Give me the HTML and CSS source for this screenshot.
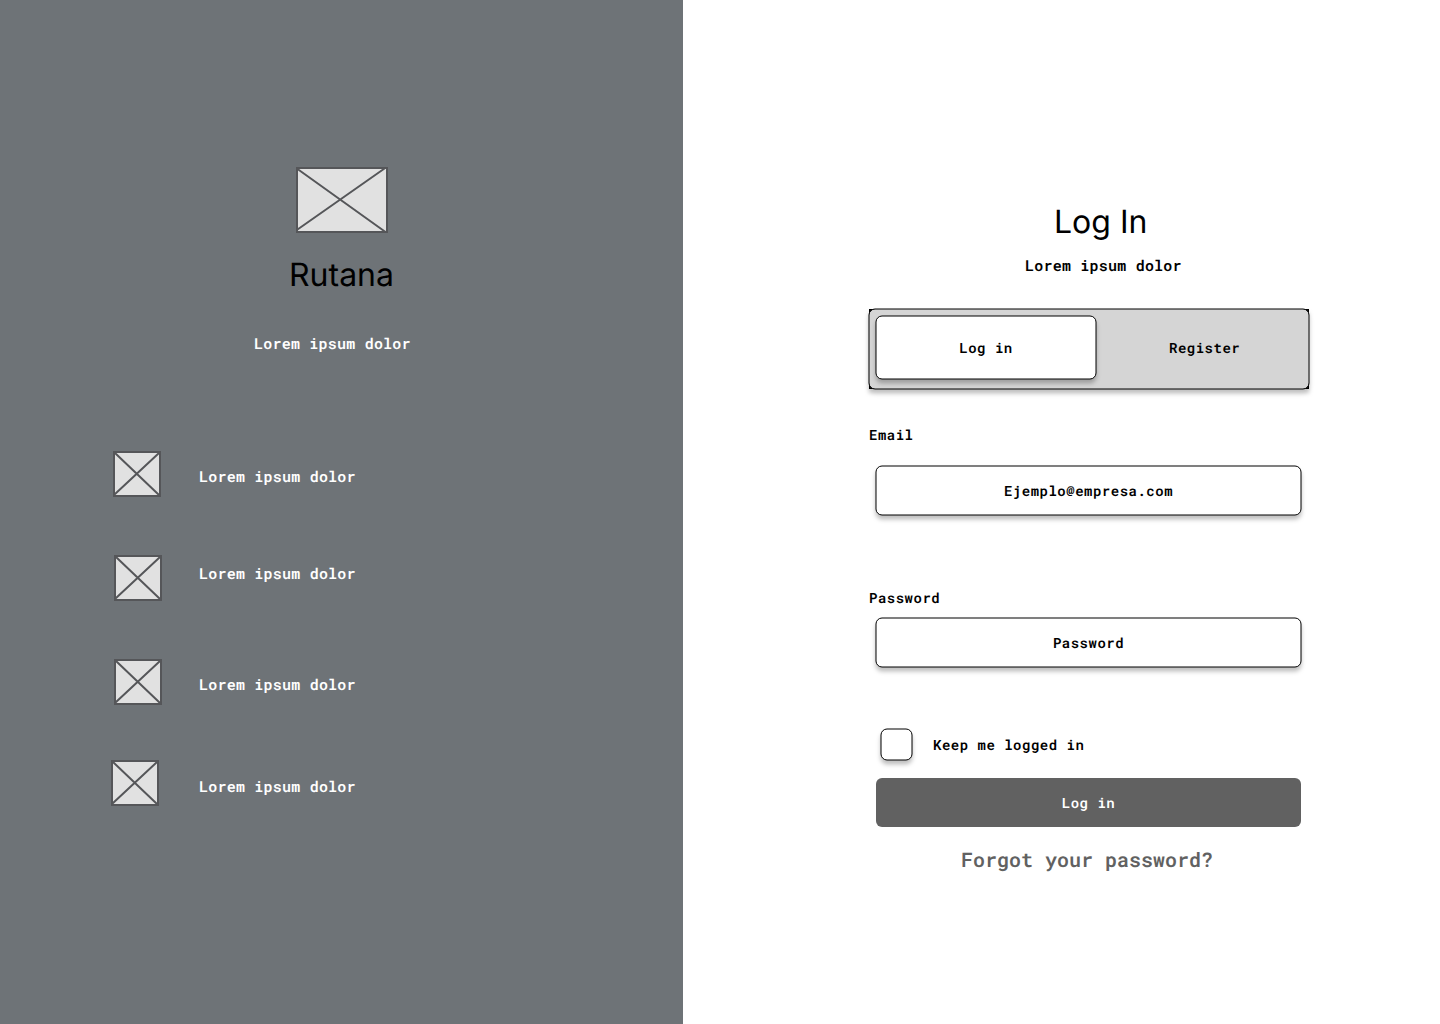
FILE: index.html
```html
<!DOCTYPE html>
<html lang="es">
<head>
<meta charset="utf-8">
<title>Rutana</title>
<link rel="stylesheet" href="styles.css">
</head>
<body>
<svg class="symbols" width="0" height="0">
  <symbol id="thumb" viewBox="0 0 48 46">
    <rect x="1" y="1" width="46" height="44" fill="#e1e1e1"/>
    <path d="M2 2 46 44M46 2 1.500 43.500" fill="none"/>
    <rect x="1" y="1" width="46" height="44" fill="none"/>
  </symbol>
</svg>
<main class="page">
  <section class="brand">
    <svg class="logo" viewBox="0 0 92 66">
      <rect x="1" y="1" width="90" height="64" fill="#e1e1e1"/>
      <path d="M1.500 2 89.500 65M88.500 1.500 1.500 62.500"/>
      <rect x="1" y="1" width="90" height="64" fill="none"/>
    </svg>
    <h1 class="title">Rutana</h1>
    <p class="copy tagline">Lorem ipsum dolor</p>
    <ul class="features">
      <li class="feature"><svg class="thumb"><use href="#thumb"/></svg><span class="copy">Lorem ipsum dolor</span></li>
      <li class="feature feature-second"><svg class="thumb"><use href="#thumb"/></svg><span class="copy">Lorem ipsum dolor</span></li>
      <li class="feature feature-third"><svg class="thumb"><use href="#thumb"/></svg><span class="copy">Lorem ipsum dolor</span></li>
      <li class="feature feature-last"><svg class="thumb"><use href="#thumb"/></svg><span class="copy">Lorem ipsum dolor</span></li>
    </ul>
  </section>
  <form class="login">
    <h2 class="title">Log In</h2>
    <p class="copy subtitle">Lorem ipsum dolor</p>
    <div class="tabs">
      <svg class="frame"><rect width="440" height="80"/><rect class="tray" width="440" height="80" rx="6"/></svg>
      <div class="tab-list">
        <div class="tab">
          <svg class="frame"><rect class="outline" width="220" height="63" rx="6"/></svg>
          <span class="label">Log in</span>
        </div>
        <span class="label tab-off">Register</span>
      </div>
    </div>
    <span class="label email-label">Email</span>
    <div class="field">
      <svg class="frame"><rect class="outline" width="425" height="49" rx="6"/></svg>
      <span class="label">Ejemplo@empresa.com</span>
    </div>
    <span class="label password-label">Password</span>
    <div class="field">
      <svg class="frame"><rect class="outline" width="425" height="49" rx="6"/></svg>
      <span class="label">Password</span>
    </div>
    <div class="keep">
      <svg class="frame check"><rect class="outline" x="1" y="1" width="31" height="31" rx="6"/></svg>
      <span class="label">Keep me logged in</span>
    </div>
    <button class="submit label" type="button">Log in</button>
    <a class="forgot">Forgot your password?</a>
  </form>
</main>
</body>
</html>
```
FILE: styles.css
```css
* { box-sizing: border-box; }
body { margin: 0; background: #fff; color: #000; text-rendering: geometricPrecision; }
p, h1, h2, ul { margin: 0; padding: 0; }
.symbols { display: none; }
.page { display: grid; grid-template-columns: 683px 1fr; height: 1024px; }
.title { font: 400 32px/40px Inter, sans-serif; }

.copy, .label, .forgot {
  font-family: "Roboto Mono", "DejaVu Sans Mono", monospace;
  font-weight: 600;
  font-size: 14px;
  line-height: 20px;
  letter-spacing: .5px;
  text-rendering: geometricPrecision;
  white-space: nowrap;
}
.copy { font-size: 15px; letter-spacing: .22px; }

.brand { background: #6e7377; padding-top: 167px; }
.logo { display: block; width: 92px; height: 66px; margin-left: 296px; }
.logo, .thumb { stroke: #555659; stroke-width: 2; fill: none; }
.brand .title { margin: 22px 0 0 289px; }
.tagline { margin: 39px 0 0 254px; color: #fff; }
.features { list-style: none; margin-top: 97px; }
.feature { display: flex; align-items: flex-start; gap: 38px; height: 46px; padding-left: 113px; color: #fff; }
.thumb { width: 48px; height: 46px; flex: none; }
.feature .copy { margin-top: 16px; }
.feature-second { margin-top: 58px; padding-left: 114px; gap: 37px; }
.feature.feature-second .copy { margin-top: 9px; }
.feature-third { margin-top: 58px; padding-left: 114px; gap: 37px; }
.feature-last { margin-top: 55px; padding-left: 111px; gap: 40px; }
.feature.feature-last .copy { margin-top: 17px; }

.login { display: flex; flex-direction: column; align-items: flex-start; padding: 202px 0 0 186px; }
.login .title { margin-left: 185px; }
.subtitle { margin: 14px 0 0 156px; }
.frame { display: block; width: 100%; height: 100%; overflow: visible; filter: drop-shadow(0 4px 2px rgba(0, 0, 0, .25)); }
.outline { fill: #fff; stroke: #000; }
.tray { fill: #d5d5d5; stroke: #000; }
.tabs, .tab, .field { display: grid; grid-template: 100% / 100%; place-items: center; }
.tabs > *, .tab > *, .field > * { grid-area: 1 / 1; }
.tab-list, .tab > .label, .field > .label { z-index: 1; }
.tabs { width: 440px; height: 80px; margin-top: 33px; }
.tab-list { display: flex; width: 100%; height: 100%; padding: 7px; }
.tab { width: 220px; height: 63px; }
.tab-off { margin: 22px 0 0 73px; }
.email-label { margin-top: 36px; }
.field { width: 425px; height: 49px; margin: 21px 0 0 7px; }
.password-label { margin-top: 73px; }
.password-label + .field { margin-top: 10px; }
.keep { display: flex; align-items: flex-start; gap: 21px; height: 32px; margin: 61px 0 0 11px; }
.keep .label { margin-top: 7px; }
.check { width: 32px; height: 32px; }
.submit { width: 425px; height: 49px; margin: 18px 0 0 7px; padding: 0; border: 0; border-radius: 6px; background: #616161; color: #fff; }
.forgot { margin: 19px 0 0 92px; font-size: 20px; line-height: 28px; letter-spacing: 0; color: #616161; }
```
